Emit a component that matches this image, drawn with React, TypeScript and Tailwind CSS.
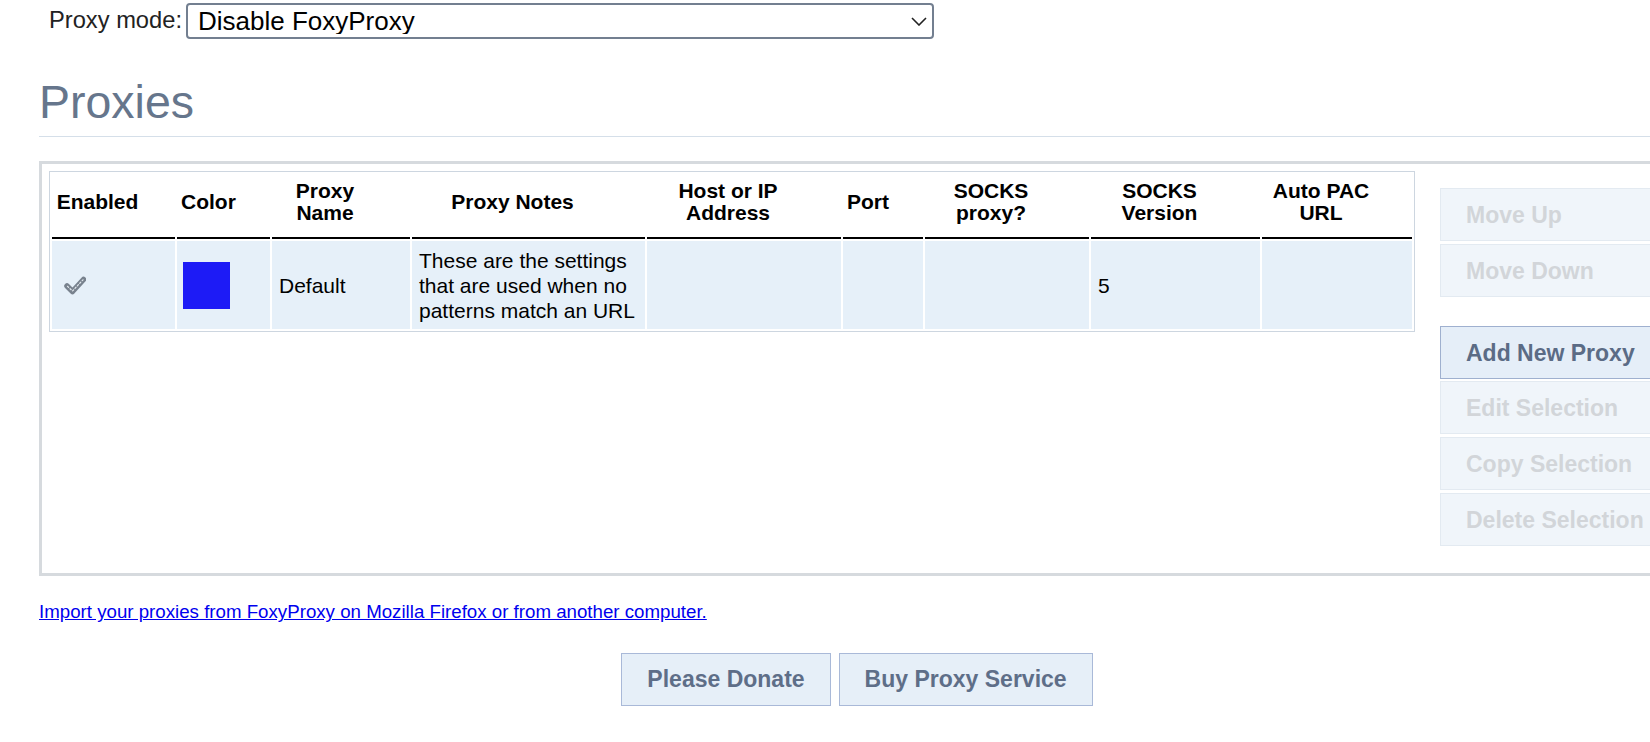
import React from "react";

function Check() {
	return (
		<svg width="22" height="19" viewBox="0 0 22 19">
			<path d="M3 10 L8.5 15.5 L19.5 3.5" fill="none" stroke="#78828e" strokeWidth="5.5" strokeLinecap="round" strokeLinejoin="round" />
			<path d="M3.5 10.3 L8.5 15 L19 3.8" fill="none" stroke="#e3e9ef" strokeWidth="1.2" strokeDasharray="1.5 2" strokeLinecap="round" />
		</svg>
	);
}

function SideButton({ label, active = false, className = "" }: { label: string; active?: boolean; className?: string }) {
	return (
		<button
			className={
				"h-[53px] w-[240px] pl-[25px] text-left text-[23px] font-bold border " +
				(active
					? "bg-[#e5eef8] border-[#9fb0cf] text-[#5b6b85]"
					: "bg-[#f0f5fa] border-[#e3eaf1] text-[#d2d5d9]") +
				" " +
				className
			}
		>
			{label}
		</button>
	);
}

export default function App() {
	return (
		<div className="w-screen h-screen overflow-hidden bg-white text-black font-['Liberation_Sans',Arial,sans-serif]">
			<div className="w-[1675px] pl-[39px]">
				{/* Proxy mode selector */}
				<div className="flex items-center pt-[3px] pl-[10px]">
					<label className="text-[23.7px] text-[#222]">Proxy mode:</label>
					<div className="relative ml-[4px]">
						<select className="appearance-none w-[748px] h-[36px] pl-[10px] text-[26px] leading-none text-black bg-white border-2 border-[#737f90] rounded-[4px]">
							<option>Disable FoxyProxy</option>
							<option>Use proxies based on their pre-defined patterns and priorities</option>
						</select>
						<svg className="absolute right-[7px] top-[14px] pointer-events-none" width="16" height="9" viewBox="0 0 16 9">
							<path d="M1 1 L8 8 L15 1" fill="none" stroke="#222" strokeWidth="1.6" />
						</svg>
					</div>
				</div>

				{/* Heading */}
				<h1 className="mt-[37px] text-[46.5px] leading-[1.15] text-[#66768c] font-normal">Proxies</h1>
				<div className="mt-[7px] border-t border-[#d5dfe9]"></div>

				{/* Proxies box */}
				<div className="mt-[24px] h-[415px] border-[3px] border-[#d6dade] p-[7px] flex items-start">
					<table className="table-fixed border-separate border-spacing-[2px] border border-[#cdd6e0] w-[1366px] text-[21px] shrink-0">
						<thead>
							<tr className="h-[65px]">
								<th className="w-[123px] pl-1 pr-9 pb-2 text-center align-middle font-bold leading-[22px] border-b-2 border-black">Enabled</th>
								<th className="w-[93px] pl-1 pr-9 pb-2 text-center align-middle font-bold leading-[22px] border-b-2 border-black">Color</th>
								<th className="w-[138px] pl-1 pr-9 pb-2 text-center align-middle font-bold leading-[22px] border-b-2 border-black">Proxy<br />Name</th>
								<th className="w-[233px] pl-1 pr-9 pb-2 text-center align-middle font-bold leading-[22px] border-b-2 border-black">Proxy Notes</th>
								<th className="w-[194px] pl-1 pr-9 pb-2 text-center align-middle font-bold leading-[22px] border-b-2 border-black">Host or IP<br />Address</th>
								<th className="w-[80px] pl-1 pr-9 pb-2 text-center align-middle font-bold leading-[22px] border-b-2 border-black">Port</th>
								<th className="w-[164px] pl-1 pr-9 pb-2 text-center align-middle font-bold leading-[22px] border-b-2 border-black">SOCKS<br />proxy?</th>
								<th className="w-[169px] pl-1 pr-9 pb-2 text-center align-middle font-bold leading-[22px] border-b-2 border-black">SOCKS<br />Version</th>
								<th className="w-[150px] pl-1 pr-9 pb-2 text-center align-middle font-bold leading-[22px] border-b-2 border-black">Auto PAC<br />URL</th>
							</tr>
						</thead>
						<tbody>
							<tr className="h-[88px] bg-[#e6f0f9] leading-[25px]">
								<td className="pl-[12px] align-middle"><Check /></td>
								<td className="pl-[6px] align-middle">
									<div className="w-[47px] h-[47px] bg-[#1d1bf6]"></div>
								</td>
								<td className="px-[7px] align-middle">Default</td>
								<td className="px-[7px] align-middle">These are the settings that are used when no patterns match an URL</td>
								<td className="px-[7px]"></td>
								<td className="px-[7px]"></td>
								<td className="px-[7px]"></td>
								<td className="px-[7px] align-middle">5</td>
								<td className="px-[7px]"></td>
							</tr>
						</tbody>
					</table>

					<div className="ml-[25px] mt-[17px] flex flex-col shrink-0">
						<SideButton label="Move Up" />
						<SideButton label="Move Down" className="mt-[3px]" />
						<SideButton label="Add New Proxy" active className="mt-[29px]" />
						<SideButton label="Edit Selection" className="mt-[2px]" />
						<SideButton label="Copy Selection" className="mt-[3px]" />
						<SideButton label="Delete Selection" className="mt-[3px]" />
					</div>
				</div>

				{/* Import link */}
				<div className="mt-[22px]">
					<a href="#" className="text-[18.7px] text-[#0000ee] underline">
						Import your proxies from FoxyProxy on Mozilla Firefox or from another computer.
					</a>
				</div>

				{/* Bottom buttons */}
				<div className="mt-[26px] flex justify-center gap-[8px]">
					<button className="h-[53px] px-[25px] border border-[#a9b9d8] bg-[#e6eff8] text-[23px] font-bold text-[#5e6e88]">Please Donate</button>
					<button className="h-[53px] px-[25px] border border-[#a9b9d8] bg-[#e6eff8] text-[23px] font-bold text-[#5e6e88]">Buy Proxy Service</button>
				</div>
			</div>
		</div>
	);
}
